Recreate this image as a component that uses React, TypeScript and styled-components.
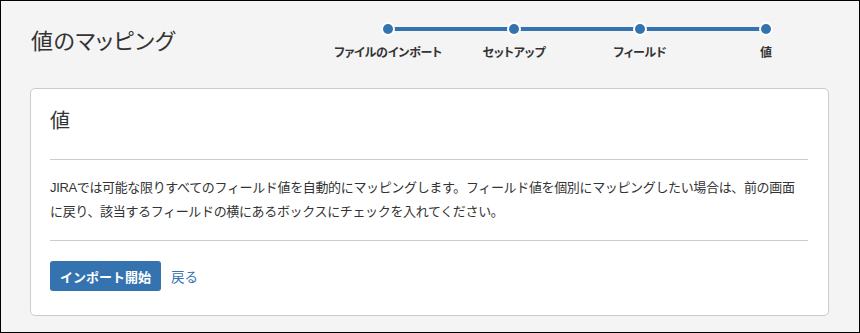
import styled, {createGlobalStyle} from 'styled-components';

const GlobalStyle = createGlobalStyle`
  html, body {
    margin: 0;
    padding: 0;
    background: #f4f4f4;
  }
  body {
    font-family: "Liberation Sans", "Noto Sans CJK JP", sans-serif;
    color: #333;
  }
`;

const Frame = styled.div`
  box-sizing: border-box;
  width: 860px;
  height: 333px;
  border: 1px solid #000;
  background: #f4f4f4;
  padding: 20px 30px 0 29px;
`;

const Header = styled.header`
  display: flex;
  justify-content: space-between;
  align-items: flex-start;
  height: 67px;
`;

const Title = styled.h1`
  margin: 6px 0 0 1px;
  font-size: 22px;
  line-height: 30px;
  font-weight: normal;
  color: #333;
  font-feature-settings: "palt";
  letter-spacing: 0.6px;
`;

const Tracker = styled.div`
  display: flex;
  flex-direction: column;
  width: 504px;
`;

const Labels = styled.ol`
  display: flex;
  margin: 8px 0 0;
  padding: 0;
  list-style: none;
`;

const Label = styled.li`
  width: 126px;
  text-align: center;
  font-size: 12px;
  line-height: 16px;
  font-weight: bold;
  color: #333;
  font-feature-settings: "palt";
  letter-spacing: -0.2px;
`;

const Card = styled.section`
  box-sizing: border-box;
  height: 228px;
  background: #fff;
  border: 1px solid #ccc;
  border-radius: 5px;
  padding: 17px 20px 0 19px;
`;

const CardTitle = styled.h2`
  margin: 0 0 23px;
  font-size: 20px;
  line-height: 30px;
  font-weight: normal;
  color: #333;
`;

const Divider = styled.hr`
  margin: 0;
  border: 0;
  border-top: 1px solid #ccc;
`;

const Body = styled.p`
  margin: 0;
  padding: 16px 0;
  font-size: 13px;
  line-height: 24px;
  color: #333;
  letter-spacing: -0.35px;
  white-space: nowrap;
`;

const Footer = styled.div`
  display: flex;
  align-items: center;
  gap: 10px;
  padding-top: 20px;
`;

const Button = styled.button`
  height: 30px;
  padding: 0 10px;
  border: 0;
  border-radius: 3px;
  background: #3572b0;
  color: #fff;
  font-family: inherit;
  font-size: 13px;
  font-weight: bold;
  cursor: pointer;
`;

const Link = styled.a`
  color: #3572b0;
  font-size: 13.5px;
  text-decoration: none;
  cursor: pointer;
`;

const steps = ['ファイルのインポート', 'セットアップ', 'フィールド', '値'];

const Track = () => (
  <svg width="504" height="16" viewBox="0 0 504 16">
    <line x1="63" y1="8" x2="441" y2="8" stroke="#3572b0" strokeWidth="4" />
    {steps.map((s, i) => (
      <g key={s}>
        <circle cx={63 + i * 126} cy="8" r="7" fill="#fff" />
        <circle cx={63 + i * 126} cy="8" r="5" fill="#3572b0" />
      </g>
    ))}
  </svg>
);

export default function App() {
  return (
    <>
      <GlobalStyle />
      <Frame>
        <Header>
          <Title>値のマッピング</Title>
          <Tracker>
            <Track />
            <Labels>
              {steps.map((s) => (
                <Label key={s}>{s}</Label>
              ))}
            </Labels>
          </Tracker>
        </Header>
        <Card>
          <CardTitle>値</CardTitle>
          <Divider />
          <Body>
            JIRAでは可能な限りすべてのフィールド値を自動的にマッピングします。フィールド値を個別にマッピングしたい場合は、前の画面
            <br />
            に戻り、該当するフィールドの横にあるボックスにチェックを入れてください。
          </Body>
          <Divider />
          <Footer>
            <Button>インポート開始</Button>
            <Link>戻る</Link>
          </Footer>
        </Card>
      </Frame>
    </>
  );
}
